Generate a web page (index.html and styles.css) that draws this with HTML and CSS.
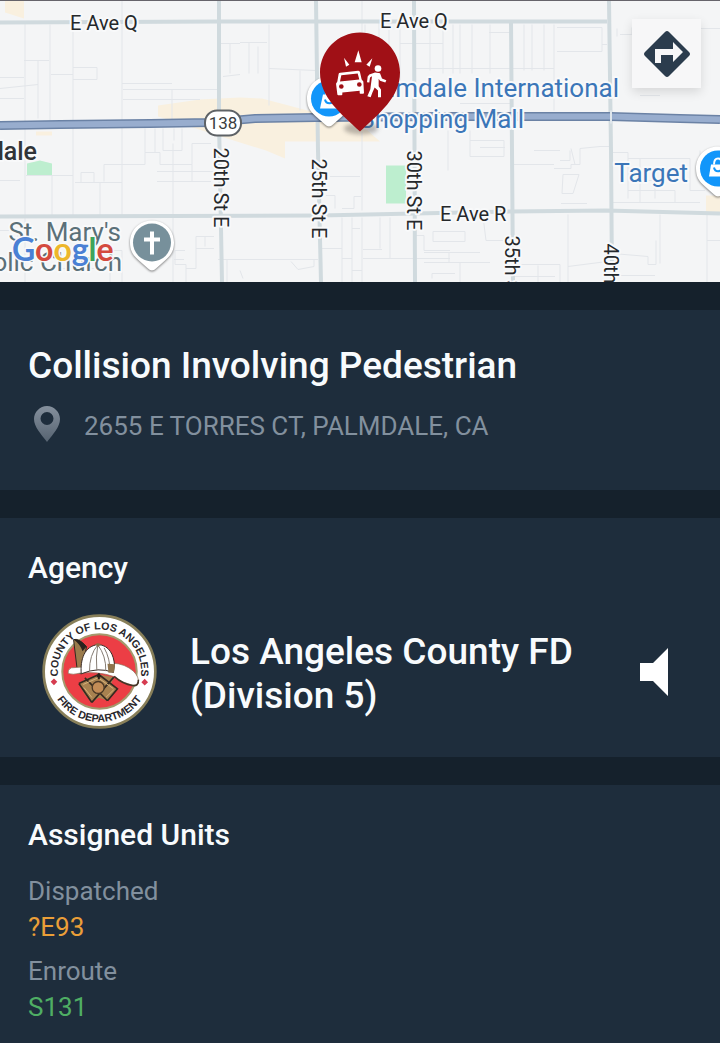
FILE: index.html
```
<!DOCTYPE html>
<html lang="en">
<head>
    <meta charset="UTF-8">
    <meta name="viewport" content="width=device-width, initial-scale=1.0">
    <title>Collision Involving Pedestrian</title>
    <link rel="stylesheet" href="styles.css">
</head>
<body>
    <header class="map">
        <svg class="map-canvas" viewBox="0 0 720 282" preserveAspectRatio="xMidYMid slice" role="img" aria-label="Map of the incident">
            <defs>
                <path id="poi-pin" d="M0-22C12.500-22 22-12.500 22 0C22 8 19 13 13 18L4 26Q0 30-4 26L-13 18C-19 13-22 8-22 0C-22-12.500-12.500-22 0-22Z"/>
            </defs>

            <!-- Built-up areas and parks -->
            <path class="area" d="M5 0H24V18L5 12ZM158 105L200 99L240 97L262 98L300 108L362 125L380 141H285V158L266 150L240 142L158 116ZM36 131H52V135H36ZM706 195H720V214H706Z"/>
            <path class="park" d="M27 163L40 160L52 163V175H27ZM386 165H406V203H386Z"/>

            <!-- Minor streets -->
            <path class="minor" d="M25 21V282M50 24V120M73 21V216M122 0V216M24 60H49M38 60V118M51 74H73M73 67H97V79H73M0 77H24M0 88L38 84M0 98H24M122 83H172M123 89H218M123 99H200M172 89V120M145 128V152H155V128M163 128V150H182V128M174 128V140M220 43H240M230 43V73M223 76L240 74M26 175H73M0 180H20M52 175V216M100 182V216M81 182V172H94V182M75 182H122M104 181V164H145V152H160V164H192V143H211M157 171H219M157 181H211M173 143V282M192 181V164M185 250H175V264H186V282M186 268H196V236H214M196 248H214M205 236V246M174 259H184M218 259H240M227 259V282M0 230H18V258H0M90 250H122V282M60 268H110V282"/>
            <path class="minor" d="M240 42H267M249 42V73M258 46V73M269 24V105M269 68L316 70M300 70V110M362 0V38M362 131V210M365 24V60M379 22V50M389 22V60M400 22V80M430 24V70M443 24V73M453 24V73M460 24V73M472 24V73M490 24V73M414 54H416M400 43H443M414 68H554M489 32H512M524 24V70M532 24V70M544 24V70M554 24V110M557 27H602V51H557M602 44H607M460 103H510M448 130V170M480 147H505M470 140H504V156H470V130M330 176H360M335 208V195H326M342 208H354V196H361M322 248H342M342 217V282M352 217V282M362 217V282M352 228H360M342 258H352M352 270H362M380 217V248M390 217V258M363 249H382M363 258H450M415 235H424V250H450M433 231H465V241H433ZM424 252H480M449 252V262M424 262H490M460 262V282M432 278V273H455M240 259H318M291 261L298 269L314 266V259M240 270L243 278"/>
            <path class="minor" d="M512 164H554M554 168H571V164H580V148L600 146H610M571 148L575 164M563 174H579L573 193H562ZM561 203H587M568 214V282M483 216L486 240H512M513 264H560V282M538 265V282M513 276H555M568 266L607 261M613 253L648 256V264H656V240M616 275H655M660 214V263M612 152H628V198M628 158H690M640 158V202M628 190H675V202M690 158V190H705M612 202H700M630 180H655V198M707 214V282M707 240H720M700 150V159M570 150V160H560M534 150H560M620 34H632V27M617 28V36M700 28H720M640 95H660"/>

            <!-- Main roads -->
            <path class="road" d="M0 22L220 21L607 21M0 216L320 215L510 211L606 210L720 213"/>
            <path class="road" d="M219 0V120L222 282M316 0L318 150L321 282M414 0L415 282M511 21L513 282M609 0L611 150L612 282"/>
            <path class="highway-edge" d="M0 125L60 124L150 123L210 122L255 118L316 117L440 116L610 116L680 118L720 119"/>
            <path class="highway" d="M0 125L60 124L150 123L210 122L255 118L316 117L440 116L610 116L680 118L720 119"/>
            <path class="crossing" d="M611 110V123"/>

            <rect class="shield" x="205" y="110" width="36" height="25" rx="12"/>
            <text class="shield-text" x="223" y="128">138</text>

            <text class="street" x="70" y="29">E Ave Q</text>
            <text class="street" x="380" y="27">E Ave Q</text>
            <text class="street" x="440" y="220">E Ave R</text>
            <text class="street" transform="translate(214 147) rotate(90)">20th St E</text>
            <text class="street" transform="translate(312 158) rotate(90)">25th St E</text>
            <text class="street" transform="translate(407 150) rotate(90)">30th St E</text>
            <text class="street" transform="translate(505 235) rotate(90)">35th St E</text>
            <text class="street" transform="translate(604 243) rotate(90)">40th St E</text>

            <text class="town" x="37" y="159">Palmdale</text>
            <text class="church" x="121" y="240">St. Mary's</text>
            <text class="church" x="122" y="270">Catholic Church</text>
            <text class="place" x="619" y="96">Palmdale International</text>
            <text class="place" x="524" y="127">Shopping Mall</text>
            <text class="place" x="688" y="181">Target</text>

            <g transform="translate(152 242)">
                <use class="poi-back" href="#poi-pin"/>
                <circle r="19" fill="#77909b"/>
                <path d="M-2-11H2V-5H8V-1H2V12H-2V-1H-8V-5H-2Z" fill="#fff"/>
            </g>
            <g transform="translate(329 98)">
                <use class="poi-back" href="#poi-pin"/>
                <circle r="18" fill="#1296fa"/>
                <path d="M-6-4H8L10 10H-9Z" fill="#fff"/>
                <path d="M-3-4C-3-12 5-12 5-4" fill="none" stroke="#fff" stroke-width="2"/>
                <path d="M-4 1C-3 6 4 6 5 1" fill="none" stroke="#1296fa" stroke-width="2"/>
            </g>
            <g transform="translate(718 168)">
                <use class="poi-back" href="#poi-pin"/>
                <circle r="18" fill="#1296fa"/>
                <path d="M-7-4H7L9 8H-9Z" fill="#fff"/>
                <path d="M-4-4C-4-12 4-12 4-4" fill="none" stroke="#fff" stroke-width="2"/>
                <path d="M-4-1C-3 4 3 4 4-1" fill="none" stroke="#1296fa" stroke-width="2"/>
            </g>

            <text class="google" x="12" y="260"><tspan fill="#4a80d4">G</tspan><tspan fill="#d44a3f">o</tspan><tspan fill="#edb72b">o</tspan><tspan fill="#4a80d4">g</tspan><tspan fill="#3fa45b">l</tspan><tspan fill="#d44a3f">e</tspan></text>

            <!-- Incident marker -->
            <ellipse class="marker-shadow" cx="361" cy="128" rx="17" ry="6"/>
            <path d="M360 32C382 32 400 50 400 72C400 97 379 113 360 131C341 113 320 97 320 72C320 50 338 32 360 32Z" fill="#a01016"/>
            <svg x="318" y="30" width="90" height="110" viewBox="0 0 270 330">
                <g fill="#fff">
                    <path d="M110 95L121 59L131 95ZM78 82L94 103L84 109ZM163 83L155 109L145 103Z"/>
                    <path fill-rule="evenodd" d="M62 130Q63 127 67 127L120 121Q125 121 126 125L131 147L136 153L138 187Q138 190 135 190H127Q125 190 125 187V181L73 186V191Q73 194 70 194H61Q58 194 58 191L54 160L58 153ZM70 134L66 153L124 147L119 129ZM70 161A7 7 0 1 0 70 175A7 7 0 1 0 70 161ZM124 155A7 7 0 1 0 124 169A7 7 0 1 0 124 155Z"/>
                    <circle cx="180" cy="114" r="10"/>
                    <path d="M154 132L171 126L186 128L192 144L205 149L202 156L186 151L182 145V167L189 177V200H180V180L170 171L163 187L158 200L148 197L157 176L162 137L156 141L154 156L147 155L149 138Z"/>
                </g>
            </svg>
        </svg>
        <button class="directions" type="button" aria-label="Directions">
            <svg viewBox="0 0 48 48" width="48" height="48">
                <path d="M22 2Q24 0 26 2L46 22Q48 24 46 26L26 46Q24 48 22 46L2 26Q0 24 2 22Z" fill="#2b3c4d"/>
                <path d="M12 33V19H30V12L40 22L30 32V25H18V33Z" fill="#f7f7f8"/>
            </svg>
        </button>
    </header>

    <main>
        <section class="panel incident">
            <h1>Collision Involving Pedestrian</h1>
            <div class="address">
                <svg viewBox="0 0 26 36" width="26" height="36" aria-hidden="true">
                    <defs>
                        <linearGradient id="pin-fill" x1="0" y1="0" x2="0" y2="1">
                            <stop offset="0" stop-color="#85909d"/>
                            <stop offset="1" stop-color="#566371"/>
                        </linearGradient>
                    </defs>
                    <path fill="url(#pin-fill)" fill-rule="evenodd" d="M13 0C20 0 26 6 26 13C26 21 19 28 13 36C7 28 0 21 0 13C0 6 6 0 13 0ZM13 6A6.500 6.500 0 1 0 13 19A6.500 6.500 0 1 0 13 6Z"/>
                </svg>
                <span>2655 E TORRES CT, PALMDALE, CA</span>
            </div>
        </section>

        <section class="panel agency">
            <h2>Agency</h2>
            <div class="agency-row">
                <svg class="seal" viewBox="36 28 346 346" role="img" aria-label="County of Los Angeles Fire Department">
                    <defs>
                        <path id="arc-top" d="M85 215A125 125 0 1 1 333 215"/>
                        <path id="arc-bottom" d="M57 201A152 152 0 0 0 361 201"/>
                    </defs>
                    <circle cx="209" cy="201" r="168" fill="#fff" stroke="#887f59" stroke-width="8"/>
                    <circle cx="209" cy="201" r="112" fill="#ec3e45" stroke="#a4996d" stroke-width="6"/>
                    <text class="seal-text"><textPath href="#arc-top" startOffset="50%">COUNTY OF LOS ANGELES</textPath></text>
                    <text class="seal-text"><textPath href="#arc-bottom" startOffset="50%">FIRE DEPARTMENT</textPath></text>
                    <path d="M72 222L82 232L72 242L62 232ZM345 223L355 233L345 243L335 233Z" fill="#d63c50"/>
                    <!-- Helmet -->
                    <path d="M131 105Q146 100 170 126L154 208L143 205Z" fill="#9a7b4c" stroke="#302820" stroke-width="3"/>
                    <path d="M131 105Q148 100 170 126L158 140Q150 118 131 105Z" fill="#29231f"/>
                    <path d="M115 207Q112 196 124 190L150 188L250 176Q286 178 311 200Q329 218 326 236Q323 246 304 241Q275 234 252 216Q205 200 150 206Q128 212 115 207Z" fill="#fff" stroke="#8a7058" stroke-width="2"/>
                    <path d="M253 216Q280 240 308 243Q327 246 326 226" fill="none" stroke="#453527" stroke-width="5"/>
                    <path d="M154 208C151 165 163 125 204 120C239 121 252 153 254 180L251 204Q206 186 154 208Z" fill="#fff" stroke="#3a2b25" stroke-width="3"/>
                    <path d="M204 121Q178 151 179 201M204 121Q197 155 201 199M204 121Q229 154 228 200M223 130Q241 161 241 203" fill="none" stroke="#857b72" stroke-width="3"/>
                    <path d="M196 119Q204 113 213 119L205 127Z" fill="#8d6d45"/>
                    <path d="M233 178L256 179L252 204L236 205Z" fill="#8f744d"/>
                    <!-- Badge -->
                    <path d="M147 237L170 222L207 210L252 218L245 236L263 253L233 289L207 280L186 294L165 271Z" fill="#a88250"/>
                    <path d="M147 237L207 210L263 253L233 289M186 294L147 237M252 218L186 294M165 220L233 289" fill="none" stroke="#352a20" stroke-width="5"/>
                    <path d="M160 240L205 220L250 252M162 249L186 279M252 256L229 278" fill="none" stroke="#d5b27a" stroke-width="3"/>
                    <circle cx="205" cy="249" r="18" fill="#c28c56" stroke="#4b3825" stroke-width="4"/>
                    <path d="M207 206V224M201 215H213" stroke="#292019" stroke-width="6"/>
                </svg>
                <p class="agency-name">Los Angeles County FD (Division 5)</p>
                <button class="speaker" type="button" aria-label="Listen">
                    <svg viewBox="0 0 28 48" width="28" height="48">
                        <path d="M0 15H13L28 0V48L13 33H0Z" fill="#fff"/>
                    </svg>
                </button>
            </div>
        </section>

        <section class="panel units">
            <h2>Assigned Units</h2>
            <dl>
                <dt>Dispatched</dt>
                <dd class="dispatched">?E93</dd>
                <dt>Enroute</dt>
                <dd class="enroute">S131</dd>
            </dl>
        </section>
    </main>
</body>
</html>
```
FILE: styles.css
```
* {
    margin: 0;
    padding: 0;
    box-sizing: border-box;
}

body {
    background-color: #15212c;
    color: #f8fbfd;
    font-family: Roboto, sans-serif;
    min-height: 100vh;
    display: flex;
    flex-direction: column;
}

button {
    border: none;
    background: none;
    cursor: pointer;
}

/* Map */
.map {
    position: relative;
    height: 282px;
    background-color: #f4f5f6;
    border-top: 1px solid #66646b;
    overflow: hidden;
}

.map-canvas {
    display: block;
    width: 100%;
    height: 281px;
}

.area {
    fill: #f9f0df;
}

.park {
    fill: #bdeecf;
}

.minor {
    fill: none;
    stroke: #e3e6ea;
    stroke-width: 1;
}

.road {
    fill: none;
    stroke: #d0dade;
    stroke-width: 4;
}

.highway-edge {
    fill: none;
    stroke: #6b82a5;
    stroke-width: 9;
}

.highway {
    fill: none;
    stroke: #98adce;
    stroke-width: 6;
}

.crossing {
    stroke: #dfe6ec;
    stroke-width: 2;
}

.shield {
    fill: #fff;
    stroke: #5e6266;
    stroke-width: 2;
}

.shield-text {
    font-size: 17px;
    fill: #3a3d40;
    text-anchor: middle;
}

.street,
.town,
.church,
.place,
.google {
    paint-order: stroke;
    stroke: #f8f9fa;
    stroke-width: 4;
    stroke-linejoin: round;
}

.street {
    font-size: 20px;
    fill: #25282b;
}

.town {
    font-size: 25px;
    font-weight: 500;
    fill: #303438;
    text-anchor: end;
}

.church {
    font-size: 26px;
    fill: #5b7078;
    text-anchor: end;
}

.place {
    font-size: 26px;
    fill: #3b76b8;
    text-anchor: end;
}

.google {
    font-family: Lato, sans-serif;
    font-size: 32px;
    font-weight: 700;
    stroke-width: 3;
}

.poi-back {
    fill: #fff;
    filter: drop-shadow(0 1px 1px rgba(0, 0, 0, 0.5));
}

.marker-shadow {
    fill: rgba(90, 85, 80, 0.4);
    filter: blur(2px);
}

.directions {
    position: absolute;
    top: 18px;
    right: 19px;
    width: 69px;
    height: 69px;
    display: flex;
    align-items: center;
    justify-content: center;
    background-color: #f7f7f8;
    box-shadow: 0 4px 10px rgba(0, 0, 0, 0.12);
}

/* Panels */
main {
    flex: 1;
    display: flex;
    flex-direction: column;
    gap: 28px;
    padding-top: 28px;
}

.panel {
    background-color: #1e2d3c;
    padding: 32px 28px;
}

h1 {
    font-size: 37px;
    font-weight: 500;
    line-height: 48px;
}

h2 {
    font-size: 30px;
    font-weight: 500;
    line-height: 36px;
}

.incident {
    padding-bottom: 48px;
}

.address {
    display: flex;
    align-items: center;
    gap: 24px;
    margin-top: 16px;
    padding-left: 6px;
    font-size: 26px;
    line-height: 36px;
    color: #82909e;
}

.address span {
    padding-top: 2px;
    margin-bottom: -2px;
}

.agency {
    padding-bottom: 28px;
}

.agency-row {
    display: flex;
    align-items: center;
    margin-top: 28px;
    padding: 0 24px 0 14px;
}

.seal {
    flex: none;
    width: 115px;
    height: 115px;
}

.seal-text {
    font-family: "Liberation Sans", sans-serif;
    font-size: 32px;
    font-weight: 700;
    fill: #29272b;
    text-anchor: middle;
}

.agency-name {
    flex: 1;
    margin: 0 40px 0 33px;
    padding-top: 4px;
    font-size: 37px;
    font-weight: 500;
    line-height: 44px;
}

.speaker svg {
    display: block;
}

.units {
    flex: 1;
    padding-bottom: 16px;
}

.units dl {
    margin-top: 20px;
    font-size: 26px;
    line-height: 36px;
}

.units dt {
    color: #82909e;
}

.units dd + dt {
    margin-top: 8px;
}

.dispatched {
    color: #eb9f38;
}

.enroute {
    color: #4fae64;
}
```
